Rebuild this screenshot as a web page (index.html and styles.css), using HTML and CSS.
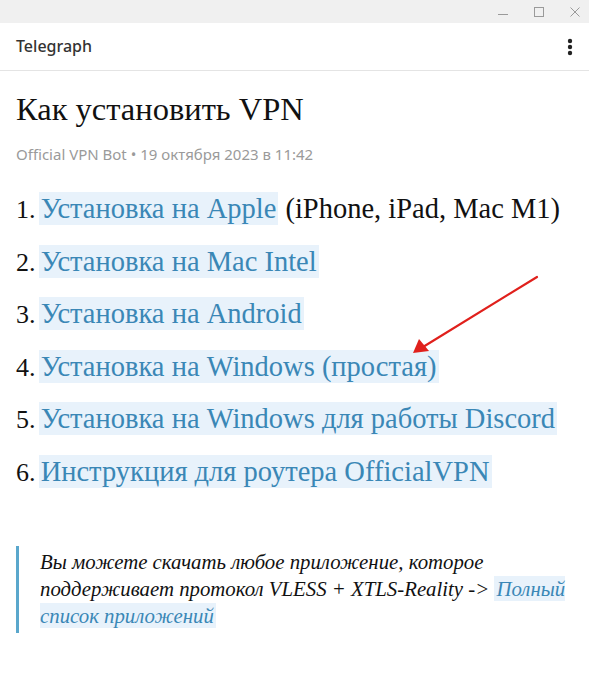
FILE: index.html
```html
<!DOCTYPE html>
<html lang="ru">
<head>
    <meta charset="UTF-8">
    <meta name="viewport" content="width=device-width, initial-scale=1.0">
    <title>Как установить VPN – Telegraph</title>
    <link rel="stylesheet" href="styles.css">
</head>
<body>

    <div class="window-bar">
        <span class="win-btn">
            <svg width="12" height="12" viewBox="0 0 12 12"><path d="M1 8.5h10" stroke="#9a9a9a" stroke-width="1"/></svg>
        </span>
        <span class="win-btn">
            <svg width="12" height="12" viewBox="0 0 12 12"><rect x="1.5" y="1.5" width="9" height="9" fill="none" stroke="#9a9a9a" stroke-width="1"/></svg>
        </span>
        <span class="win-btn">
            <svg width="12" height="12" viewBox="0 0 12 12"><path d="M1.5 1.5l9 9M10.5 1.5l-9 9" stroke="#9a9a9a" stroke-width="1"/></svg>
        </span>
    </div>

    <header class="app-header">
        <span class="app-title">Telegraph</span>
        <span class="menu-btn">
            <svg width="6" height="18" viewBox="0 0 6 18">
                <circle cx="3" cy="3" r="2.2" fill="#222"/>
                <circle cx="3" cy="9" r="2.2" fill="#222"/>
                <circle cx="3" cy="15" r="2.2" fill="#222"/>
            </svg>
        </span>
    </header>

    <main class="article">
        <h1>Как установить VPN</h1>
        <p class="meta">Official VPN Bot • 19 октября 2023 в 11:42</p>

        <div class="steps">
            <p><span class="num">1.</span> <a href="#">Установка на Apple</a> (iPhone, iPad, Mac M1)</p>
            <p><span class="num">2.</span> <a href="#">Установка на Mac Intel</a></p>
            <p><span class="num">3.</span> <a href="#">Установка на Android</a></p>
            <p class="has-arrow"><span class="num">4.</span> <a href="#">Установка на Windows (простая)</a>
                <svg class="arrow" width="140" height="90" viewBox="0 0 140 90">
                    <path d="M128 6 L14 76" stroke="#e0201c" stroke-width="2.2" stroke-linecap="round"/>
                    <path d="M4 82 L10 68 L20 80 Z" fill="#e0201c"/>
                </svg>
            </p>
            <p><span class="num">5.</span> <a href="#">Установка на Windows для работы Discord</a></p>
            <p><span class="num">6.</span> <a href="#">Инструкция для роутера OfficialVPN</a></p>
        </div>

        <blockquote>
            Вы можете скачать любое приложение, которое поддерживает протокол VLESS + XTLS-Reality -&gt; <a href="#">Полный список приложений</a>
        </blockquote>
    </main>

</body>
</html>
```

FILE: styles.css
```css
body {
    margin: 0;
    background-color: #ffffff;
    font-family: "Liberation Serif", "DejaVu Serif", serif;
    color: #000;
}
.window-bar {
    height: 23px;
    background-color: #f0f0f0;
    display: flex;
    justify-content: flex-end;
    align-items: center;
}
.win-btn {
    width: 24px;
    margin-left: 12px;
    display: flex;
    justify-content: center;
    align-items: center;
}
.win-btn:last-child {
    margin-right: 2px;
}
.app-header {
    height: 47px;
    border-bottom: 1px solid #e4e4e4;
    display: flex;
    align-items: center;
    justify-content: space-between;
    padding: 0 16px 0 16px;
}
.app-title {
    font-family: "Noto Sans", "Open Sans", sans-serif;
    font-size: 16px;
    font-weight: 500;
    color: #333;
    margin-top: -2px;
}
.menu-btn {
    display: flex;
    align-items: center;
}
.article {
    padding: 20px 16px 40px 16px;
}
.article h1 {
    margin: 0;
    font-size: 32.5px;
    font-weight: normal;
    line-height: 36px;
    color: #111;
}
.meta {
    margin: 17px 0 0 0;
    font-family: "Noto Sans", "Open Sans", sans-serif;
    font-size: 15px;
    color: #9a9a9a;
}
.steps {
    margin-top: 19px;
}
.steps p {
    margin: 0;
    font-size: 28.5px;
    line-height: 52.5px;
    color: #111;
}
.num {
    font-size: 26px;
    line-height: 1;
    margin-right: -4px;
}
.article a {
    color: #3a87b6;
    text-decoration: none;
    background-color: #e8f2fb;
    padding: 1px 2px;
}
.has-arrow {
    position: relative;
}
.arrow {
    position: absolute;
    left: 393px;
    top: -70px;
}
blockquote {
    margin: 48px 0 0 0;
    padding: 2px 0 4px 21px;
    border-left: 3px solid #5aa7cc;
    font-style: italic;
    font-size: 20.8px;
    line-height: 27px;
    color: #111;
}
```
